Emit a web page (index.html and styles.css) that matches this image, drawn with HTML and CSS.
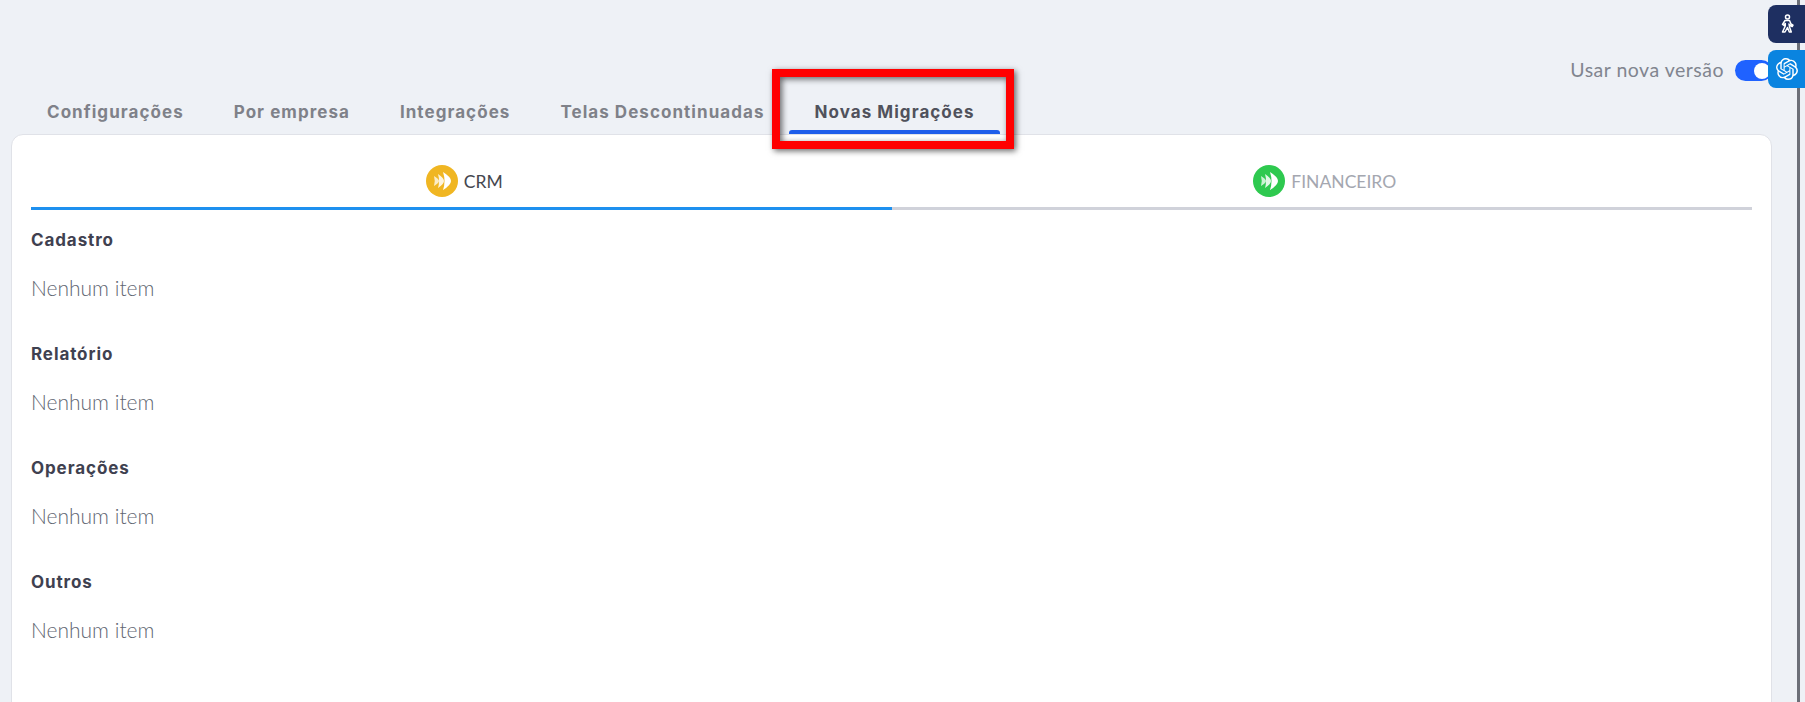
FILE: index.html
```html
<!DOCTYPE html>
<html lang="pt-BR">
<head>
<meta charset="utf-8">
<title>Novas Migrações</title>
<link rel="stylesheet" href="styles.css">
</head>
<body>
<div class="page">
  <div class="version-row">
    <span class="version-label">Usar nova versão</span>
    <span class="toggle"><span class="knob"></span></span>
  </div>
  <nav class="tabs">
    <a class="tab">Configurações</a>
    <a class="tab">Por empresa</a>
    <a class="tab">Integrações</a>
    <a class="tab">Telas Descontinuadas</a>
    <a class="tab tab-active">Novas Migrações</a>
  </nav>
  <main class="card">
    <div class="subtabs">
      <div class="subtab subtab-active">
        <svg class="logo" viewBox="0 0 32 32"><circle cx="16" cy="16" r="16" fill="#f0b622"/><g fill="#fff"><path d="M8 11Q13 14 13 16Q13 18 8 21Q9.500 16 8 11z" opacity=".75"/><path d="M12 9Q18 13 18 16Q18 19 12 23Q14 16 12 9z" opacity=".85"/><path d="M17 7Q25 12 25 16Q25 20 17 25Q20 16 17 7z"/></g></svg>
        <span>CRM</span>
      </div>
      <div class="subtab">
        <svg class="logo" viewBox="0 0 32 32"><circle cx="16" cy="16" r="16" fill="#2ec94f"/><g fill="#fff"><path d="M8 11Q13 14 13 16Q13 18 8 21Q9.500 16 8 11z" opacity=".75"/><path d="M12 9Q18 13 18 16Q18 19 12 23Q14 16 12 9z" opacity=".85"/><path d="M17 7Q25 12 25 16Q25 20 17 25Q20 16 17 7z"/></g></svg>
        <span>FINANCEIRO</span>
      </div>
    </div>
    <section class="group"><h2>Cadastro</h2><p>Nenhum item</p></section>
    <section class="group"><h2>Relatório</h2><p>Nenhum item</p></section>
    <section class="group"><h2>Operações</h2><p>Nenhum item</p></section>
    <section class="group"><h2>Outros</h2><p>Nenhum item</p></section>
  </main>
  <div class="rail"></div>
  <button class="side-btn side-dark" aria-label="Acessibilidade">
    <svg viewBox="0 0 16 20" width="16" height="20" fill="#1e2f61" stroke="#fff" stroke-width="1.500" stroke-linejoin="round"><circle cx="8.500" cy="3" r="2"/><path d="M6 6.500h4.500l1.500 3.500 2 1.200-.8 1.300-2.700-1.500-.5-1 .5 3 1.800 5h-2l-1.800-4.500-2.500 4.500H3.500l2.800-6V9.500L5 11.500l-1.500-1z"/></svg>
  </button>
  <button class="side-btn side-blue" aria-label="Assistente">
    <svg viewBox="0 0 24 24" width="22" height="22" fill="#fff"><path d="M22.2819 9.8211a5.9847 5.9847 0 0 0-.5157-4.9108 6.0462 6.0462 0 0 0-6.5098-2.9A6.0651 6.0651 0 0 0 4.9807 4.1818a5.9847 5.9847 0 0 0-3.9977 2.9 6.0462 6.0462 0 0 0 .7427 7.0966 5.98 5.98 0 0 0 .511 4.9107 6.051 6.051 0 0 0 6.5146 2.9001A5.9847 5.9847 0 0 0 13.2599 24a6.0557 6.0557 0 0 0 5.7718-4.2058 5.9894 5.9894 0 0 0 3.9977-2.9001 6.0557 6.0557 0 0 0-.7475-7.0729zm-9.022 12.6081a4.4755 4.4755 0 0 1-2.8764-1.0408l.1419-.0804 4.7783-2.7582a.7948.7948 0 0 0 .3927-.6813v-6.7369l2.02 1.1686a.071.071 0 0 1 .038.052v5.5826a4.504 4.504 0 0 1-4.4945 4.4944zm-9.6607-4.1254a4.4708 4.4708 0 0 1-.5346-3.0137l.142.0852 4.783 2.7582a.7712.7712 0 0 0 .7806 0l5.8428-3.3685v2.3324a.0804.0804 0 0 1-.0332.0615L9.74 19.9502a4.4992 4.4992 0 0 1-6.1408-1.6464zM2.3408 7.8956a4.485 4.485 0 0 1 2.3655-1.9728V11.6a.7664.7664 0 0 0 .3879.6765l5.8144 3.3543-2.0201 1.1685a.0757.0757 0 0 1-.071 0l-4.8303-2.7865A4.504 4.504 0 0 1 2.3408 7.872zm16.5963 3.8558L13.1038 8.364 15.1192 7.2a.0757.0757 0 0 1 .071 0l4.8303 2.7913a4.4944 4.4944 0 0 1-.6765 8.1042v-5.6772a.79.79 0 0 0-.407-.667zm2.0107-3.0231l-.142-.0852-4.7735-2.7818a.7759.7759 0 0 0-.7854 0L9.409 9.2297V6.8974a.0662.0662 0 0 1 .0284-.0615l4.8303-2.7866a4.4992 4.4992 0 0 1 6.6802 4.66zM8.3065 12.863l-2.02-1.1638a.0804.0804 0 0 1-.038-.0567V6.0742a4.4992 4.4992 0 0 1 7.3757-3.4537l-.142.0805L8.704 5.459a.7948.7948 0 0 0-.3927.6813zm1.0976-2.3654l2.602-1.4998 2.6069 1.4998v2.9994l-2.5974 1.4997-2.6067-1.4997Z"/></svg>
  </button>
  <div class="highlight"></div>
</div>
</body>
</html>
```
FILE: styles.css
```css
* { box-sizing: border-box; }
html, body { margin: 0; height: 100%; overflow: hidden; }
body { background: #eef1f6; font-family: "Lato", "Noto Sans", sans-serif; }
.page { position: relative; height: 702px; padding: 54px 0 0 11px; overflow: hidden; }
.version-row { display: flex; justify-content: flex-end; align-items: center; gap: 11px; height: 33px; padding-right: 33px; }
.version-label { font-size: 19.5px; color: #81858f; letter-spacing: .5px; padding-bottom: 2px; }
.toggle { display: block; width: 37px; height: 21px; border-radius: 11px; background: #1f62ff; position: relative; }
.knob { position: absolute; right: 2px; top: 2.500px; width: 16px; height: 16px; border-radius: 50%; background: #fff; }
.tabs { display: flex; height: 47px; padding-left: 11px; }
.tab { display: block; height: 47px; padding: 15px 25px 0; font-family: "Inter", "Noto Sans", sans-serif; font-weight: 700; font-size: 17px; letter-spacing: 1.05px; line-height: 20px; color: #7f8189; }
.tab-active { color: #50525c; position: relative; }
.tab-active::after { content: ""; position: absolute; left: 0; right: 0; bottom: 0; height: 4px; background: #1f5eea; border-radius: 3px 3px 0 0; }
.card { width: 1761px; height: 600px; background: #fff; border: 1px solid #e0e2e8; border-radius: 12px; padding: 0 19px; }
.subtabs { display: flex; height: 75px; }
.subtab { flex: 1; display: flex; align-items: center; justify-content: center; gap: 6px; height: 75px; padding: 20px 0 0 6px; border-bottom: 3px solid #d0d2da; color: #a4a7b0; font-size: 17.5px; }
.subtab-active { border-bottom-color: #1e90ef; color: #45474f; }
.logo { width: 32px; height: 32px; flex: none; }
.group { height: 114px; padding-top: 18px; }
.group h2 { margin: 0; font-family: "Inter", "Noto Sans", sans-serif; font-weight: 700; font-size: 17px; letter-spacing: .9px; line-height: 24px; color: #3f4150; }
.group p { margin: 24px 0 0; font-size: 21px; font-weight: 300; line-height: 24px; color: #5f6672; }
.rail { position: absolute; left: 1797px; top: 0; bottom: 0; width: 3px; background: #6c6f78; }
.side-btn { position: absolute; right: 0; width: 37px; border: 0; padding: 0; border-radius: 8px 0 0 8px; display: flex; align-items: center; justify-content: center; }
.side-dark { top: 5px; height: 38px; background: #1e2f61; }
.side-blue { top: 50px; height: 38px; background: #0a84e0; }
.highlight { position: absolute; left: 772px; top: 69px; width: 242px; height: 80px; border: 8px solid #f00; box-shadow: 2px 2px 6px rgba(0,0,0,.6), inset 2px 2px 6px rgba(0,0,0,.6); }
```
